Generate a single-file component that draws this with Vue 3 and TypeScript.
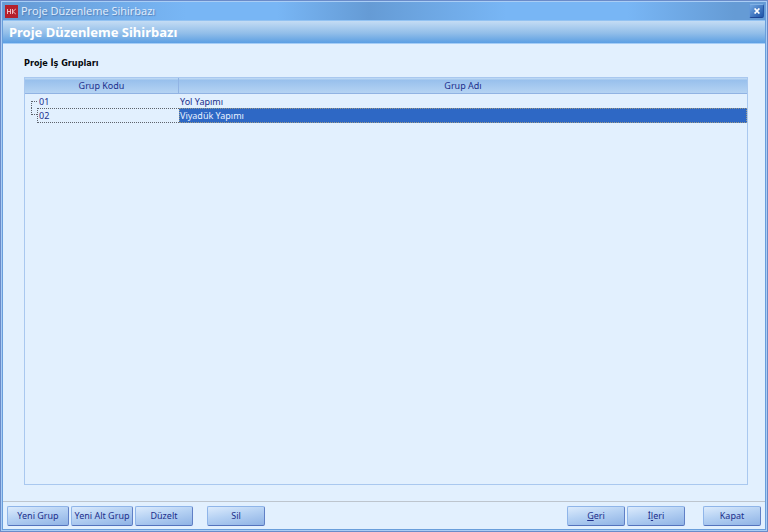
<script setup lang="ts">
import { ref } from 'vue'

interface WorkGroup {
  code: string
  name: string
}

const title = 'Proje Düzenleme Sihirbazı'
const groups: WorkGroup[] = [
  { code: '01', name: 'Yol Yapımı' },
  { code: '02', name: 'Viyadük Yapımı' },
]
const selected = ref('02')
</script>

<template>
  <div class="window">
    <header class="titlebar">
      <svg class="logo" viewBox="0 0 13 13" aria-hidden="true">
        <rect width="13" height="13" fill="#b5202c" />
        <path d="M2.5 4v5M5.5 4v5M2.5 6.5h3M7.5 4v5M10.8 4L7.8 6.5L10.8 9" fill="none" stroke="#f3c9cf" stroke-width="0.9" />
      </svg>
      <span class="caption">{{ title }}</span>
      <button class="close" type="button" aria-label="Kapat">
        <svg viewBox="0 0 8 6" aria-hidden="true">
          <path d="M1.6 0.5L6.4 5.5M6.4 0.5L1.6 5.5" fill="none" stroke="#fff" stroke-width="1.7" />
        </svg>
      </button>
    </header>
    <h1 class="banner">{{ title }}</h1>

    <main class="content">
      <h2 id="groups-title" class="section-title">Proje İş Grupları</h2>
      <div class="grid">
        <table aria-labelledby="groups-title">
          <thead>
            <tr>
              <th class="code-col" scope="col">Grup Kodu</th>
              <th scope="col">Grup Adı</th>
            </tr>
          </thead>
          <tbody>
            <tr
              v-for="group in groups"
              :key="group.code"
              :class="{ selected: group.code === selected }"
              @click="selected = group.code"
            >
              <td>
                <div class="node">
                  <span class="branch"></span>
                  <span class="code">{{ group.code }}</span>
                </div>
              </td>
              <td><div class="name">{{ group.name }}</div></td>
            </tr>
          </tbody>
        </table>
      </div>
    </main>

    <footer class="actions">
      <button class="btn wide" type="button">Yeni Grup</button>
      <button class="btn wide" type="button">Yeni Alt Grup</button>
      <button class="btn" type="button">Düzelt</button>
      <button class="btn apart" type="button">Sil</button>
      <button class="btn push" type="button"><u>G</u>eri</button>
      <button class="btn" type="button">İ<u>l</u>eri</button>
      <button class="btn last" type="button">Kapat</button>
    </footer>
  </div>
</template>

<style>
body {
  margin: 0;
}
</style>

<style scoped>
.window {
  box-sizing: border-box;
  min-height: 100vh;
  display: flex;
  flex-direction: column;
  padding: 1px 2px 2px;
  border: 1px solid #6a8bc9;
  background: #e2f0fe;
  box-shadow: inset 0 0 0 1px #a9cdf5, inset 0 0 0 2px #699edb;
  font-family: "Noto Sans", "Open Sans", sans-serif;
  font-size: 9px;
  color: #202f8c;
}

.titlebar {
  display: flex;
  align-items: center;
  height: 18px;
  padding: 0 1px 0 2px;
  background: linear-gradient(90deg, #659bd5 0%, #78b6f5 24%, #78b6f5 36%, #659bd5 48%, #78b6f5 66%, #78b6f5 82%, #659bd5 96%);
}

.logo {
  width: 13px;
  height: 13px;
}

.caption {
  flex: 1;
  margin-left: 3px;
  font-family: "Open Sans", "Noto Sans", sans-serif;
  font-size: 11px;
  line-height: 18px;
  color: #e3effc;
  text-shadow: 1px 1px 1px #557fb7;
}

.close {
  display: flex;
  align-items: center;
  justify-content: center;
  width: 15px;
  height: 14px;
  padding: 0;
  border: 1px solid;
  border-color: #80b1e5 #2857a6 #1d4595 #6398d7;
  border-radius: 2px;
  background: linear-gradient(135deg, #70a6e1, #1f54a8);
}

.close svg {
  width: 8px;
  height: 6px;
}

.banner {
  box-sizing: border-box;
  height: 24px;
  margin: 0;
  padding-left: 6px;
  border-top: 1px solid #92c2f2;
  border-bottom: 1px solid #a5cdf6;
  background: linear-gradient(#c4dcf4, #92bee9 55%, #5c9fe3);
  font-size: 13px;
  line-height: 22px;
  color: #fff;
}

.content {
  flex: 1;
  display: flex;
  flex-direction: column;
  padding: 12px 17px 16px 21px;
}

.section-title {
  margin: 0 0 6px;
  font-family: "DejaVu Sans Condensed", "DejaVu Sans", sans-serif;
  font-size: 9px;
  line-height: 15px;
  color: #05080c;
}

.grid {
  flex: 1;
  border: 1px solid #a9c8ef;
}

table {
  width: 100%;
  table-layout: fixed;
  border-collapse: separate;
  border-spacing: 0;
}

th {
  box-sizing: border-box;
  height: 16px;
  padding: 0;
  border-bottom: 1px solid #91b3e3;
  background: linear-gradient(#bbd7f4 0, #bbd7f4 1px, #98c0ec 2px, #b5d3f3 100%);
  font-weight: 400;
  line-height: 15px;
}

.code-col {
  width: 154px;
  border-right: 1px solid #91b3e3;
}

td {
  height: 14px;
  padding: 0;
  line-height: 13px;
}

.node {
  display: flex;
  height: 14px;
}

.branch {
  box-sizing: border-box;
  width: 6px;
  height: 7px;
  margin: 7px 0 0 6px;
  border-top: 1px dotted #5d636c;
  border-left: 1px dotted #5d636c;
}

.code,
.name {
  box-sizing: border-box;
  height: 14px;
  padding: 0 1px;
  border: 1px solid transparent;
}

.name {
  padding: 0;
}

.code {
  flex: 1;
}

.selected .node,
.selected .code,
.selected .name {
  height: 15px;
}

.selected .branch {
  margin-top: 0;
  border-top: 0;
  border-bottom: 1px dotted #5d636c;
}

.selected .code {
  border: 1px dotted #5d636c;
  border-right: 0;
}

.selected .name {
  border: 1px dotted #9b9986;
  background: #2e68c5;
  color: #e8f1ff;
}

.actions {
  display: flex;
  gap: 2px;
  padding: 4px 4px 3px 4px;
  border-top: 1px solid #bdc5ce;
}

.btn {
  box-sizing: border-box;
  width: 58px;
  height: 20px;
  padding: 0;
  border: 1px solid;
  border-color: #8fb5e9 #6080c6 #5473bd #8fb5e9;
  border-radius: 2px;
  background: linear-gradient(170deg, #dcebfc, #b5d1f3 45%, #8fb3e5);
  font: inherit;
  line-height: 16px;
  color: #202f8c;
  white-space: nowrap;
}

.wide {
  width: 62px;
}

.apart {
  margin-left: 12px;
}

.push {
  margin-left: auto;
}

.last {
  margin-left: 16px;
}
</style>
